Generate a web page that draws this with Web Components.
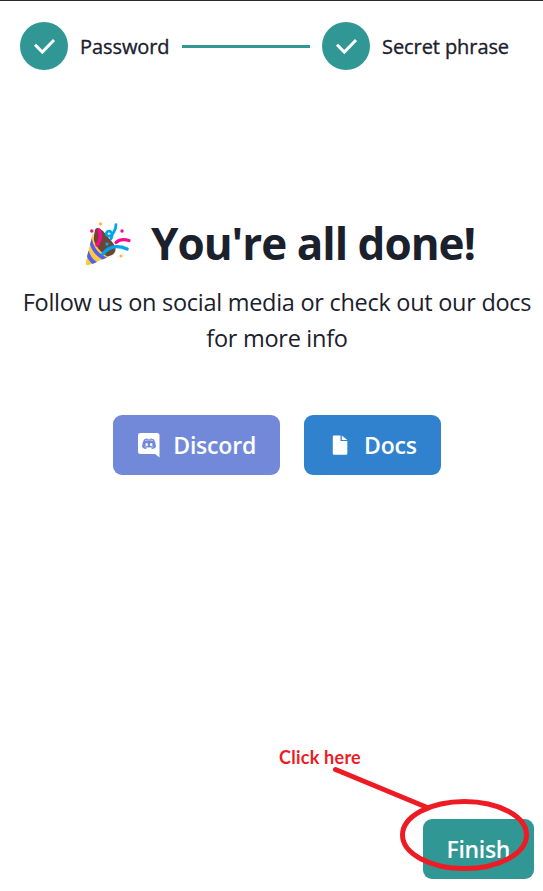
<!DOCTYPE html>
<html lang="en">
<head>
<meta charset="UTF-8">
<meta name="viewport" content="width=device-width, initial-scale=1">
<title>Setup complete</title>
<style>
  body {
    margin: 0;
    background: #fff;
    color: #1a202c;
    font-family: "Open Sans", "Noto Sans", sans-serif;
  }
</style>
</head>
<body>
<setup-page>
  <step-list slot="steps">
    <step-item>Password</step-item>
    <step-item>Secret phrase</step-item>
  </step-list>
  <done-message>
    <span slot="title">You're all done!</span>
    Follow us on social media or check out our docs<br>for more info
  </done-message>
  <link-button slot="links" icon="discord">Discord</link-button>
  <link-button slot="links" icon="file" style="--bg: #3182ce">Docs</link-button>
  <link-button slot="footer" style="--bg: #319795; --spacing: -0.35px">Finish</link-button>
  <click-hint slot="hint">Click here</click-hint>
</setup-page>

<script>
// Page shell: steps on top, message in the middle, action at the bottom
class SetupPage extends HTMLElement {
  constructor() {
    super();
    this.attachShadow({ mode: 'open' });
    this.shadowRoot.innerHTML = `
      <style>
        :host {
          position: relative;
          display: flex;
          flex-direction: column;
          box-sizing: border-box;
          width: 543px;
          height: 891px;
          border-top: 1px solid #29292b;
          overflow: hidden;
        }
        header {
          padding: 21px 20px 0;
        }
        main {
          padding-top: 144px;
        }
        .links {
          display: flex;
          justify-content: center;
          gap: 24px;
          margin-top: 59px;
          padding-left: 11px;
        }
        footer {
          display: flex;
          justify-content: flex-end;
          margin-top: auto;
          padding: 0 9px 12px;
        }
      </style>
      <header><slot name="steps"></slot></header>
      <main>
        <slot></slot>
        <div class="links"><slot name="links"></slot></div>
      </main>
      <footer><slot name="footer"></slot></footer>
      <slot name="hint"></slot>
    `;
  }
}

class StepList extends HTMLElement {
  constructor() {
    super();
    this.attachShadow({ mode: 'open' });
    this.shadowRoot.innerHTML = `
      <style>
        :host {
          display: flex;
          align-items: center;
        }
        ::slotted(step-item:not(:last-child)) {
          flex: 0 0 290px;
          margin-right: 12px;
        }
      </style>
      <slot></slot>
    `;
  }
}

class StepItem extends HTMLElement {
  constructor() {
    super();
    this.attachShadow({ mode: 'open' });
    this.shadowRoot.innerHTML = `
      <style>
        :host {
          display: flex;
          align-items: center;
          height: 48px;
          font-size: 20px;
          font-weight: 500;
          line-height: 30px;
          white-space: nowrap;
        }
        .circle {
          display: flex;
          align-items: center;
          justify-content: center;
          width: 48px;
          height: 48px;
          flex-shrink: 0;
          border-radius: 50%;
          background: #319795;
        }
        .label {
          margin-left: 12px;
          padding-top: 2px;
          letter-spacing: -0.08px;
          -webkit-text-stroke: 0.35px currentColor;
        }
        .line {
          flex: 1;
          height: 3px;
          margin: 1px 0 0 12px;
          background: #319795;
        }
        :host(:last-child) .line {
          display: none;
        }
      </style>
      <span class="circle">
        <svg width="48" height="48" viewBox="0 0 48 48" fill="none" stroke="#fff" stroke-width="3">
          <path d="M15 22.8 L22.3 30 L34 18"/>
        </svg>
      </span>
      <span class="label"><slot></slot></span>
      <span class="line"></span>
    `;
  }
}

class DoneMessage extends HTMLElement {
  constructor() {
    super();
    this.attachShadow({ mode: 'open' });
    this.shadowRoot.innerHTML = `
      <style>
        :host {
          display: block;
        }
        h1 {
          display: flex;
          align-items: center;
          margin: 0 0 12px 84px;
          height: 58px;
          font-size: 44px;
          font-weight: 700;
          line-height: 58px;
          letter-spacing: -1px;
          white-space: nowrap;
        }
        svg {
          flex-shrink: 0;
          margin: 4px 19px 0 0;
        }
        p {
          margin: 0;
          padding-left: 11px;
          font-size: 23.5px;
          font-weight: 400;
          line-height: 36px;
          letter-spacing: -0.28px;
          text-align: center;
          white-space: nowrap;
        }
      </style>
      <h1>
        <svg width="48" height="48" viewBox="0 0 48 48" fill="none" stroke-linecap="round">
          <path d="M11 9 C13 5 16 8 19 10 L29 22 C33 27 32 32 28 34 L20 37 L9 20Z" fill="#6d4534"/>
          <path d="M10 11 C8 20 12 28 24 36 L5 44 Q1 45 2 41 L8 15Z" fill="#ffc83d"/>
          <path d="M7.8 17 C9 25 14 33 23 36.5 L18.5 38.5 C12 35 8 30 6 23.5Z M4.5 29.5 C6 34 9 39 13 41 L8.5 43 C6 41 4 38 3 35.5Z" fill="#4f5fef"/>
          <path d="M15 9 C18 15 16 20 13 24" stroke="#f70a8d" stroke-width="3.5"/>
          <path d="M19 33 C25 25 34 24 43 28" stroke="#00a6ed" stroke-width="3.5"/>
          <path d="M32 3.500 C32 9 28 16 24 15 C20 13 24 8 27 11 C29 13 28 16 27 18" stroke="#00a6ed" stroke-width="2.7"/>
          <path d="M32 21.500 C36 18 40 18 45 19.500" stroke="#f70a8d" stroke-width="3.200"/>
          <g stroke="none">
            <circle cx="16.5" cy="2.8" r="1.6" fill="#ffb636"/>
            <circle cx="37" cy="35" r="1.6" fill="#ffb636"/>
            <circle cx="7.800" cy="10" r="1.700" fill="#f70a8d"/>
            <circle cx="38" cy="10" r="1.700" fill="#f70a8d"/>
            <circle cx="23" cy="23" r="1.700" fill="#00a6ed"/>
          </g>
        </svg>
        <slot name="title"></slot>
      </h1>
      <p><slot></slot></p>
    `;
  }
}

const ICONS = {
  discord: `
    <svg width="24" height="26" viewBox="0 0 24 26">
      <path fill="#fff" d="M3.5 1 H20 Q22.5 1 22.5 3.5 V25.5 L18 22 H3.5 Q1 22 1 19.5 V3.5 Q1 1 3.5 1Z"/>
      <path fill="#7289da" d="M7 7.500 Q9 6.400 10.700 6.500 L11 7.100 H13 L13.300 6.500 Q15.500 6.500 17 7.500 Q19 11 19 15 Q17.400 17 15 17 L14 15.700 H10 L9 17 Q6.500 17 5 15 Q5 11 7 7.500Z"/>
      <ellipse cx="9.700" cy="12.500" rx="1.300" ry="1.500" fill="#fff"/>
      <ellipse cx="14.200" cy="12.500" rx="1.300" ry="1.500" fill="#fff"/>
      <path d="M7.500 14.700 Q12 17 16.500 14.700 M8 8.600 Q12 7.200 16 8.600" stroke="#fff" stroke-width=".5" fill="none"/>
    </svg>`,
  file: `
    <svg width="24" height="24" viewBox="0 0 24 24">
      <path fill="#fff" d="M5.500 2.500 H12.500 V8 H19.300 V20.500 Q19.300 21.700 18.100 21.700 H6 Q4.800 21.700 4.800 20.500 V3.500 Q4.800 2.500 5.500 2.500Z M13.800 2.500 L19.300 7 H13.800Z"/>
    </svg>`
};

class LinkButton extends HTMLElement {
  constructor() {
    super();
    this.attachShadow({ mode: 'open' });
  }

  connectedCallback() {
    const icon = ICONS[this.getAttribute('icon')] || '';
    this.shadowRoot.innerHTML = `
      <style>
        :host {
          display: block;
        }
        button {
          display: flex;
          align-items: center;
          height: 60px;
          margin: 0;
          padding: 0 24px;
          border: 0;
          border-radius: 9px;
          background: var(--bg, #7289da);
          color: #fff;
          font: 600 23px/36px "Open Sans", "Noto Sans", sans-serif;
          letter-spacing: var(--spacing, -0.2px);
          white-space: nowrap;
          cursor: pointer;
        }
        svg {
          flex-shrink: 0;
          margin-right: 12px;
        }
      </style>
      <button type="button">${icon}<span><slot></slot></span></button>
    `;
  }
}

// Hand-drawn callout that lies over the finish button
class ClickHint extends HTMLElement {
  constructor() {
    super();
    this.attachShadow({ mode: 'open' });
    this.shadowRoot.innerHTML = `
      <style>
        :host {
          position: absolute;
          left: 279px;
          top: 744px;
          color: #ed1c24;
          font: 700 18px/24px Lato, sans-serif;
          letter-spacing: 0.25px;
          white-space: nowrap;
          pointer-events: none;
        }
        svg {
          position: absolute;
          left: 0;
          top: 0;
        }
      </style>
      <slot></slot>
      <svg width="264" height="146" viewBox="279 745 264 146" fill="none" stroke="#ed1c24" stroke-width="5" stroke-linecap="round">
        <path d="M335.5 769.5 L426 807"/>
        <ellipse cx="464.5" cy="835" rx="62" ry="33.5"/>
      </svg>
    `;
  }
}

customElements.define('setup-page', SetupPage);
customElements.define('step-list', StepList);
customElements.define('step-item', StepItem);
customElements.define('done-message', DoneMessage);
customElements.define('link-button', LinkButton);
customElements.define('click-hint', ClickHint);
</script>
</body>
</html>
